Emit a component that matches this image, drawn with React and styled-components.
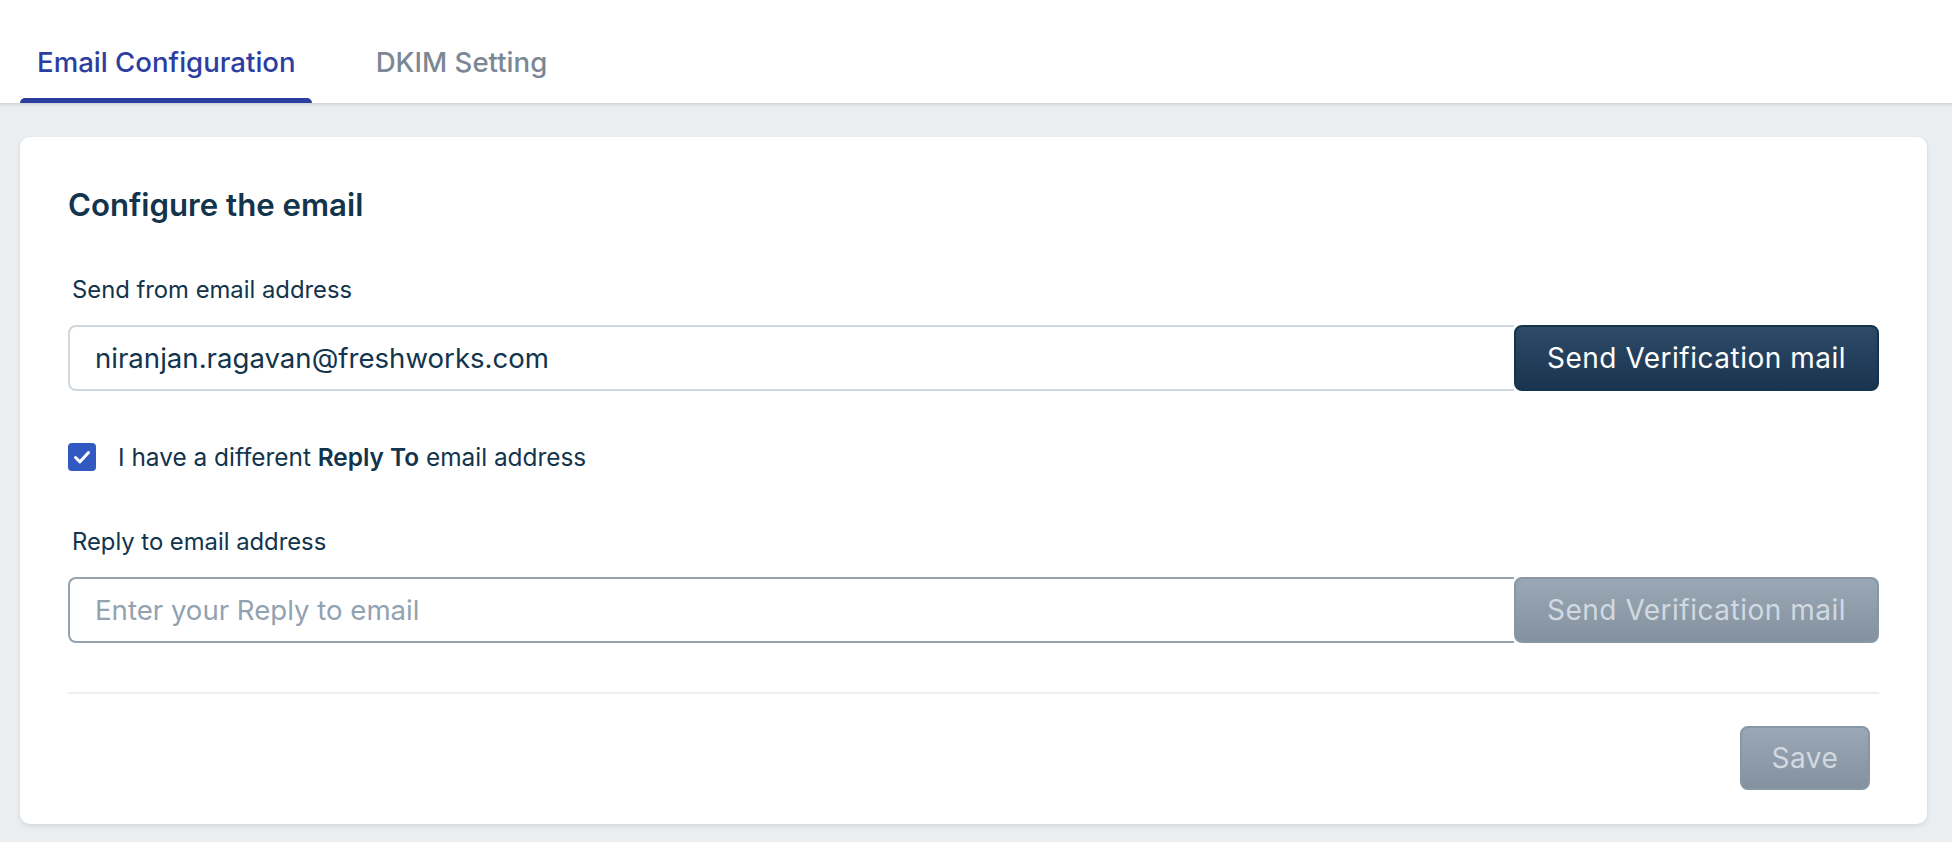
import React from "react";
import styled, { createGlobalStyle } from "styled-components";

const Global = createGlobalStyle`
  html, body { margin: 0; padding: 0; background: #ebeef0; }
  body { font-family: Inter, "Noto Sans", sans-serif; color: #12344d; -webkit-font-smoothing: antialiased; }
  * { box-sizing: border-box; }
`;

const Page = styled.div`
  min-height: 842px;
  background: #ebeef0;
  display: flex;
  flex-direction: column;
`;

const TabBar = styled.div`
  height: 103px;
  background: #fff;
  display: flex;
  align-items: flex-end;
  padding-left: 20px;
  gap: 47px;
  box-shadow: 0 2px 3px rgba(18, 52, 77, 0.14);
  position: relative;
  z-index: 1;
`;

const Tab = styled.div`
  position: relative;
  height: 103px;
  padding: 26px 16px 5px 17px;
  display: flex;
  align-items: center;
  font-size: 27.6px;
  font-weight: 500;
  color: ${(p) => (p.$active ? "#2c3e9f" : "#7b8794")};
  &::after {
    content: "";
    position: absolute;
    left: 0;
    right: 0;
    bottom: 0;
    height: 5px;
    border-radius: 5px 5px 0 0;
    background: ${(p) => (p.$active ? "#2c3e9f" : "transparent")};
  }
`;

const Card = styled.div`
  margin: 34px 25px 20px 20px;
  background: #fff;
  border-radius: 10px;
  box-shadow: 0 2px 4px rgba(18, 52, 77, 0.12);
  padding: 48px 48px 34px 48px;
  display: flex;
  flex-direction: column;
`;

const Heading = styled.h2`
  margin: 0 0 49px 0;
  font-size: 31.2px;
  line-height: 40px;
  font-weight: 600;
  color: #12344d;
`;

const Label = styled.label`
  display: block;
  padding-left: 4px;
  font-size: 23.8px;
  line-height: 32px;
  color: #12344d;
  margin-bottom: 19px;
`;

const Field = styled.div`
  display: flex;
  height: 66px;
`;

const Input = styled.input`
  flex: 1;
  min-width: 0;
  height: 66px;
  border: 2px solid ${(p) => (p.$strong ? "#95a3b1" : "#cfd7df")};
  border-right: none;
  border-radius: 8px 0 0 8px;
  padding: 0 24px 0 25px;
  font-family: Inter, "Noto Sans", sans-serif;
  font-size: 27.6px;
  color: #12344d;
  outline: none;
  background: #fff;
  &::placeholder { color: #92a2b1; }
`;

const Button = styled.button`
  height: ${(p) => p.$h || 66}px;
  width: ${(p) => p.$w}px;
  padding: 0;
  border-radius: 8px;
  font-family: Inter, "Noto Sans", sans-serif;
  font-size: 28px;
  letter-spacing: 0.5px;
  font-weight: 400;
  cursor: pointer;
  border: 2px solid ${(p) => (p.$disabled ? "#8797a6" : "#12344d")};
  color: ${(p) => (p.$disabled ? "#d1d9e1" : "#fff")};
  background: ${(p) =>
    p.$disabled
      ? "linear-gradient(180deg, #9aa7b4 0%, #84929f 100%)"
      : "linear-gradient(180deg, #2d4a66 0%, #1b3450 100%)"};
  white-space: nowrap;
  flex: none;
`;

const CheckRow = styled.label`
  display: flex;
  align-items: center;
  gap: 22px;
  height: 32px;
  margin: 50px 0 53px 0;
  font-size: 24.4px;
  color: #12344d;
`;

const Box = styled.span`
  width: 28px;
  height: 28px;
  border-radius: 4px;
  background: #3259c2;
  display: inline-flex;
  align-items: center;
  justify-content: center;
  flex: none;
`;

const Strong = styled.b`
  font-weight: 600;
`;

const Divider = styled.hr`
  border: none;
  height: 2px;
  background: #ebeff3;
  margin: 49px 0 32px 0;
`;

const Footer = styled.div`
  display: flex;
  justify-content: flex-end;
  padding-right: 9px;
`;

export default function App() {
  return (
    <Page>
      <Global />
      <TabBar>
        <Tab $active>Email Configuration</Tab>
        <Tab>DKIM Setting</Tab>
      </TabBar>
      <Card>
        <Heading>Configure the email</Heading>
        <Label>Send from email address</Label>
        <Field>
          <Input defaultValue="niranjan.ragavan@freshworks.com" />
          <Button $w={365}>Send Verification mail</Button>
        </Field>
        <CheckRow>
          <Box>
            <svg width="22" height="22" viewBox="0 0 22 22">
              <path d="M4.5 11.5 L9 15.8 L17.5 6.5" fill="none" stroke="#fff" strokeWidth="3" strokeLinecap="round" strokeLinejoin="round" />
            </svg>
          </Box>
          <span>
            I have a different <Strong>Reply To</Strong> email address
          </span>
        </CheckRow>
        <Label>Reply to email address</Label>
        <Field>
          <Input $strong placeholder="Enter your Reply to email" />
          <Button $w={365} $disabled>Send Verification mail</Button>
        </Field>
        <Divider />
        <Footer>
          <Button $disabled $h={64} $w={130}>Save</Button>
        </Footer>
      </Card>
    </Page>
  );
}
